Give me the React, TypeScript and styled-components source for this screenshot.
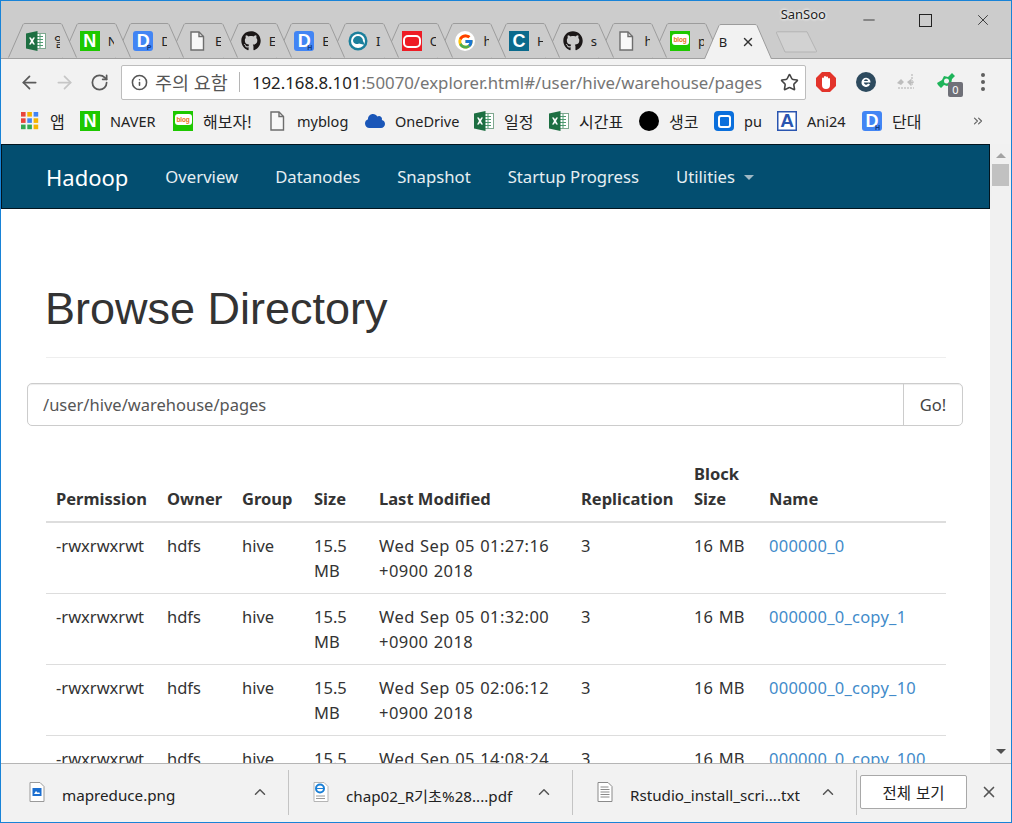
import React from "react";
import styled, { createGlobalStyle } from "styled-components";
import { ArrowLeft, ArrowRight, RotateCw, Info, Star, ChevronUp, X, Minus, ChevronsRight } from "lucide-react";
import { FaGithub, FaCloud } from "react-icons/fa";
import { FcGoogle } from "react-icons/fc";

const UI_FONT = `"Noto Sans", "Noto Sans CJK KR", sans-serif`;

const GlobalStyle = createGlobalStyle`
  html, body {
    margin: 0;
    height: 100%;
    overflow: hidden;
    background: #fff;
  }
  body {
    font-family: ${UI_FONT};
  }
`;

const Window = styled.div`
  box-sizing: border-box;
  width: 1012px;
  height: 823px;
  border: 1px solid #1883d7;
  display: flex;
  flex-direction: column;
  position: relative;
  overflow: hidden;
`;

/* ---- title bar + tabs ---- */

const TitleBar = styled.div`
  box-sizing: border-box;
  height: 58px;
  flex: none;
  background: #cccccc;
  border-bottom: 1px solid #a0a0a0;
  padding-left: 7px;
  display: flex;
  align-items: flex-end;
  position: relative;
`;

const Tab = styled.div<{ $z: number; $active?: boolean }>`
  position: relative;
  z-index: ${(p) => p.$z};
  width: ${(p) => (p.$active ? 68 : 69)}px;
  height: 35px;
  flex: none;
  margin-right: ${(p) => (p.$active ? 0 : -15.33)}px;
  margin-left: ${(p) => (p.$active ? -2 : 0)}px;
  margin-bottom: ${(p) => (p.$active ? -1 : 0)}px;
  display: flex;
  align-items: center;
  gap: ${(p) => (p.$active ? 0 : 8)}px;
  padding: 1px 0 0 ${(p) => (p.$active ? 15 : 18)}px;
  box-sizing: border-box;
`;

const TabShape = styled.svg`
  position: absolute;
  inset: 0;
  width: 100%;
  height: 100%;
`;

const TabIcon = styled.span`
  position: relative;
  display: flex;
  flex: none;
`;

const TabTitle = styled.span<{ $active?: boolean }>`
  position: relative;
  width: ${(p) => (p.$active ? 20 : 6)}px;
  overflow: hidden;
  font-size: 13px;
  line-height: 18px;
  color: #222;
  white-space: nowrap;
  flex: none;
`;

const TabClose = styled.span`
  position: relative;
  display: flex;
  color: #333;
  margin-left: 2px;
`;

const NewTab = styled.svg`
  width: 43px;
  height: 22px;
  flex: none;
  margin: 0 0 5px 3px;
`;

const WindowArea = styled.div`
  position: absolute;
  top: 0;
  right: 0;
  height: 38px;
  display: flex;
  align-items: center;
  z-index: 40;
`;

const UserName = styled.span`
  font-size: 13px;
  color: #222;
  text-shadow: 0 0 3px #fff, 0 0 3px #fff;
  margin-right: 14px;
  position: relative;
  top: -6px;
`;

const WinButton = styled.span`
  width: 57px;
  display: flex;
  justify-content: center;
  color: #222;
`;

const MaximizeBox = styled.span`
  box-sizing: border-box;
  width: 13px;
  height: 13px;
  border: 1px solid #222;
`;

/* ---- address toolbar ---- */

const Toolbar = styled.div`
  box-sizing: border-box;
  height: 47px;
  flex: none;
  background: #f2f2f2;
  display: flex;
  align-items: center;
  padding: 0 0 1px 11px;
`;

const NavButton = styled.span<{ $muted?: boolean }>`
  width: 35px;
  display: flex;
  justify-content: center;
  color: ${(p) => (p.$muted ? "#c6c6c6" : "#5a5a5a")};
`;

const Omnibox = styled.div`
  box-sizing: border-box;
  width: 685px;
  height: 35px;
  margin-left: 4px;
  background: #fff;
  border: 1px solid #bdbdbd;
  border-radius: 2px;
  display: flex;
  align-items: center;
  padding-left: 9px;
  color: #555;
`;

const SecurityLabel = styled.span`
  font-size: 18.5px;
  color: #555;
  margin-left: 7px;
  white-space: nowrap;
`;

const OmniDivider = styled.span`
  width: 1px;
  height: 20px;
  background: #b5b5b5;
  margin: 0 12px 0 11px;
`;

const Url = styled.span`
  flex: 1;
  font-size: 16.8px;
  color: #757575;
  white-space: nowrap;
  overflow: hidden;
`;

const UrlHost = styled.span`
  color: #222;
`;

const OmniStar = styled.span`
  display: flex;
  width: 32px;
  justify-content: center;
  color: #444;
`;

const ExtSlot = styled.span`
  width: 40px;
  display: flex;
  justify-content: center;
  position: relative;
`;

const ExtBadge = styled.span`
  position: absolute;
  left: 22px;
  top: 10px;
  width: 15px;
  height: 15px;
  border-radius: 2px;
  background: #6f7078;
  color: #fff;
  font-size: 11px;
  line-height: 15px;
  text-align: center;
`;

const Kebab = styled.span`
  display: flex;
  flex-direction: column;
  gap: 3px;
  margin-left: 15px;
  i {
    display: block;
    width: 4px;
    height: 4px;
    border-radius: 50%;
    background: #5f5f5f;
  }
`;

/* ---- bookmarks ---- */

const BookmarkBar = styled.div`
  box-sizing: border-box;
  height: 38px;
  flex: none;
  background: #f2f2f2;
  display: flex;
  align-items: center;
  padding: 0 26px 8px 19px;
`;

const Bookmark = styled.span<{ $w: number; $ko?: boolean }>`
  display: flex;
  align-items: center;
  gap: 10px;
  width: ${(p) => p.$w}px;
  flex: none;
  font-size: ${(p) => (p.$ko ? 16 : 14.5)}px;
  color: #222;
  white-space: nowrap;
`;

const MoreBookmarks = styled.span`
  margin-left: auto;
  display: flex;
  color: #666;
`;

/* ---- favicons ---- */

const Fav = styled.span<{ $bg: string; $round?: number }>`
  position: relative;
  width: 20px;
  height: 20px;
  flex: none;
  display: flex;
  align-items: center;
  justify-content: center;
  background: ${(p) => p.$bg};
  border-radius: ${(p) => p.$round ?? 0}px;
  color: #fff;
  font-family: "Liberation Sans", sans-serif;
  font-weight: 700;
  font-size: 18px;
  overflow: hidden;
`;

const FavSub = styled.span`
  position: absolute;
  right: 2px;
  bottom: -1px;
  font-size: 7px;
  line-height: 8px;
  color: #123a80;
`;

const BlogBubble = styled.span`
  width: 17px;
  height: 11px;
  margin-top: -3px;
  background: #fff;
  border-radius: 3px;
  color: #e8761a;
  font-size: 6.5px;
  line-height: 11px;
  text-align: center;
  letter-spacing: -0.2px;
`;

const OracleRing = styled.span`
  width: 14px;
  height: 9px;
  border: 2px solid #fff;
  border-radius: 5px;
`;

const QSquare = styled.span`
  width: 9px;
  height: 9px;
  border: 2.5px solid #fff;
  border-radius: 3px;
`;

const LetterA = styled.span`
  color: #2a55b0;
  font-size: 19px;
`;

const ABox = styled(Fav)`
  box-shadow: inset 0 0 0 1.5px #2a55b0;
`;

type FavKind = "excel" | "naver" | "dp" | "dh" | "doc" | "github" | "ring" | "oracle" | "google" | "c" | "blog" | "apps" | "cloud" | "dot" | "q" | "a";

const ExcelIcon = () => (
  <svg width="20" height="20" viewBox="0 0 20 20">
    <rect x="8" y="2.5" width="11.5" height="15" fill="#fff" stroke="#7fa88f" />
    <path d="M11 5.5h6M11 8.5h6M11 11.5h6M11 14.5h6M14 3v14" stroke="#4f9a70" strokeWidth="1" />
    <path d="M0 2.6 11.5 0v20L0 17.4z" fill="#1d6f42" />
    <path d="M3 6.5h1.9L6 8.6l1.2-2.1H9L7 10l2 3.5H7.1L6 11.4l-1.1 2.1H3L5 10z" fill="#fff" />
  </svg>
);

const DocIcon = () => (
  <svg width="20" height="20" viewBox="0 0 20 20" fill="none" stroke="#6e6e6e" strokeWidth="1.4">
    <path d="M4 1h8l4.5 4.5V19H4z" fill="#f8f8f8" />
    <path d="M12 1v4.5h4.5" />
  </svg>
);

const RingIcon = () => (
  <svg width="20" height="20" viewBox="0 0 20 20">
    <circle cx="10" cy="10" r="9.5" fill="#1b7f9c" />
    <circle cx="10" cy="10" r="7" fill="#fff" />
    <path d="M5 10a5 5 0 0 1 10 0l2 4-6-1.5A4 4 0 0 1 5 10z" fill="#1b7f9c" />
  </svg>
);

const AppsIcon = () => {
  const colors = ["#e8453c", "#f4b400", "#4285f4", "#e8453c", "#4285f4", "#f4b400", "#34a853", "#34a853", "#f4b400"];
  return (
    <svg width="20" height="20" viewBox="0 0 20 20">
      {colors.map((c, i) => (
        <rect key={i} x={1 + (i % 3) * 6.3} y={1 + Math.floor(i / 3) * 6.3} width="4.6" height="4.6" fill={c} />
      ))}
    </svg>
  );
};

const Favicon: React.FC<{ kind: FavKind }> = ({ kind }) => {
  switch (kind) {
    case "excel":
      return <ExcelIcon />;
    case "naver":
      return <Fav $bg="#1ec800">N</Fav>;
    case "dp":
      return (
        <Fav $bg="#4285f4" $round={3}>
          D<FavSub>P</FavSub>
        </Fav>
      );
    case "dh":
      return (
        <Fav $bg="#4285f4" $round={3}>
          D<FavSub>H</FavSub>
        </Fav>
      );
    case "doc":
      return <DocIcon />;
    case "github":
      return <FaGithub size={20} color="#1b1717" />;
    case "ring":
      return <RingIcon />;
    case "oracle":
      return (
        <Fav $bg="#ee1c25">
          <OracleRing />
        </Fav>
      );
    case "google":
      return (
        <Fav $bg="#fff" $round={10}>
          <FcGoogle size={17} />
        </Fav>
      );
    case "c":
      return <Fav $bg="#0b6a8c">C</Fav>;
    case "blog":
      return (
        <Fav $bg="#1ec800">
          <BlogBubble>blog</BlogBubble>
        </Fav>
      );
    case "apps":
      return <AppsIcon />;
    case "cloud":
      return <FaCloud size={20} color="#1a56b8" />;
    case "dot":
      return <Fav $bg="#000" $round={10} />;
    case "q":
      return (
        <Fav $bg="#0a6fdc" $round={4}>
          <QSquare />
        </Fav>
      );
    case "a":
      return (
        <ABox $bg="#fff">
          <LetterA>A</LetterA>
        </ABox>
      );
  }
};

/* ---- page ---- */

const Viewport = styled.div`
  flex: 1;
  min-height: 0;
  display: flex;
  background: #fff;
`;

const Page = styled.div`
  flex: 1;
  min-width: 0;
  overflow: hidden;
`;

const Navbar = styled.nav`
  box-sizing: border-box;
  height: 65px;
  background: #034e70;
  border: 1px solid #02151f;
  display: flex;
  align-items: center;
  padding-left: 44px;
`;

const Brand = styled.span`
  font-size: 22px;
  color: #fff;
  margin-right: 37px;
`;

const NavLink = styled.span`
  font-size: 16.7px;
  color: #e6eef2;
  margin-right: 37px;
  display: flex;
  align-items: center;
  white-space: nowrap;
`;

const Caret = styled.span`
  width: 0;
  height: 0;
  margin-left: 9px;
  margin-top: 2px;
  border-top: 5px solid #9fb8c4;
  border-left: 5px solid transparent;
  border-right: 5px solid transparent;
`;

const Content = styled.div`
  padding: 0 44px 0 45px;
`;

const PageHeader = styled.div`
  margin-top: 75px;
  padding-bottom: 23px;
  border-bottom: 1px solid #eeeeee;
`;

const Title = styled.h1`
  margin: 0 0 0 -1px;
  font-family: "Liberation Sans", Arial, sans-serif;
  font-weight: 400;
  font-size: 45px;
  line-height: 49.5px;
  color: #333;
`;

const InputGroup = styled.div`
  box-sizing: border-box;
  height: 43px;
  margin: 25px -17px 0 -19px;
  border: 1px solid #cccccc;
  border-radius: 5px;
  box-shadow: inset 0 1px 1px rgba(0, 0, 0, 0.075);
  display: flex;
  align-items: center;
  font-size: 16.5px;
  color: #555;
`;

const PathText = styled.span`
  flex: 1;
  padding-left: 15px;
`;

const GoButton = styled.span`
  width: 59px;
  height: 100%;
  box-sizing: border-box;
  border-left: 1px solid #cccccc;
  display: flex;
  align-items: center;
  justify-content: center;
  color: #444;
`;

const Table = styled.table`
  width: 900px;
  margin-top: 25px;
  table-layout: fixed;
  border-collapse: collapse;
  font-size: 16.5px;
  line-height: 25px;
  color: #333;
`;

const HeadCell = styled.th`
  padding: 10px;
  text-align: left;
  vertical-align: bottom;
  font-weight: 700;
  border-bottom: 2px solid #dddddd;
`;

const Cell = styled.td`
  padding: 10px;
  vertical-align: top;
  border-top: 1px solid #dddddd;
  word-spacing: 1.5px;
`;

const DateText = styled.span`
  letter-spacing: 0.45px;
  word-spacing: 0.5px;
`;

const FileLink = styled.span`
  color: #428bca;
  white-space: nowrap;
  letter-spacing: 0.25px;
`;

const Scrollbar = styled.div`
  width: 21px;
  flex: none;
  background: #f1f1f1;
  display: flex;
  flex-direction: column;
  align-items: center;
`;

const ScrollArrow = styled.span<{ $down?: boolean }>`
  width: 0;
  height: 0;
  border-left: 5px solid transparent;
  border-right: 5px solid transparent;
  ${(p) => (p.$down ? "border-top: 5px solid #505050;" : "border-bottom: 5px solid #a3a3a3;")}
  margin-top: ${(p) => (p.$down ? "auto" : "9px")};
  margin-bottom: ${(p) => (p.$down ? "9px" : "0")};
`;

const ScrollThumb = styled.span`
  width: 17px;
  height: 22px;
  margin-top: 6px;
  background: #c1c1c1;
`;

/* ---- download shelf ---- */

const Shelf = styled.div`
  box-sizing: border-box;
  height: 59px;
  flex: none;
  background: #f2f2f2;
  border-top: 1px solid #b5b5b5;
  display: flex;
  align-items: center;
  padding-bottom: 2px;
`;

const DownloadItem = styled.div`
  box-sizing: border-box;
  width: 284px;
  flex: none;
  height: 45px;
  display: flex;
  align-items: center;
  padding-left: 24px;
  border-right: 1px solid #c4c4c4;
  font-size: 15.2px;
  color: #222;
`;

const FirstItem = styled(DownloadItem)`
  width: 288px;
  padding-left: 28px;
`;

const FileIconSlot = styled.span`
  display: flex;
  width: 33px;
  flex: none;
`;

const FileName = styled.span`
  flex: 1;
  white-space: nowrap;
  overflow: hidden;
  padding-top: 6px;
`;

const ItemChevron = styled.span`
  display: flex;
  width: 56px;
  flex: none;
  justify-content: center;
  color: #555;
`;

const ShowAll = styled.span`
  box-sizing: border-box;
  width: 107px;
  height: 34px;
  margin-left: 3px;
  background: #fff;
  border: 1px solid #a8a8a8;
  border-radius: 2px;
  font-size: 15.5px;
  word-spacing: 1px;
  color: #222;
  display: flex;
  align-items: center;
  justify-content: center;
`;

const ShelfClose = styled.span`
  margin-left: 13px;
  display: flex;
  color: #555;
`;

const ImageFile = () => (
  <svg width="16" height="20" viewBox="0 0 16 20">
    <path d="M1 .5h10l4 4v15H1z" fill="#fff" stroke="#9a9a9a" />
    <rect x="3.5" y="6" width="9" height="8" fill="#1c6fd0" />
    <path d="M5 12l2-3 2 2 1-1 1 2z" fill="#fff" />
  </svg>
);

const PdfFile = () => (
  <svg width="16" height="20" viewBox="0 0 16 20">
    <path d="M1 .5h10l4 4v15H1z" fill="#fff" stroke="#b5b5b5" />
    <circle cx="7" cy="6.5" r="4" fill="none" stroke="#1a7fd6" strokeWidth="2" />
    <path d="M4 6.5h6" stroke="#1a7fd6" />
    <path d="M3 14h9M3 16.5h9" stroke="#999" />
  </svg>
);

const TextFile = () => (
  <svg width="16" height="20" viewBox="0 0 16 20">
    <path d="M1 .5h10l4 4v15H1z" fill="#fff" stroke="#8a8a8a" />
    <path d="M3.5 5h8M3.5 7.5h9M3.5 10h9M3.5 12.5h9M3.5 15h9" stroke="#8a8a8a" />
  </svg>
);

/* ---- data ---- */

const TAB_ICONS: { kind: FavKind; letter: string }[] = [
  { kind: "excel", letter: "일" },
  { kind: "naver", letter: "N" },
  { kind: "dp", letter: "D" },
  { kind: "doc", letter: "E" },
  { kind: "github", letter: "E" },
  { kind: "dh", letter: "E" },
  { kind: "ring", letter: "I" },
  { kind: "oracle", letter: "O" },
  { kind: "google", letter: "h" },
  { kind: "c", letter: "H" },
  { kind: "github", letter: "s" },
  { kind: "doc", letter: "h" },
  { kind: "blog", letter: "p" },
];

const BOOKMARKS: { kind: FavKind; label: string; w: number; ko?: boolean }[] = [
  { kind: "apps", label: "앱", w: 60, ko: true },
  { kind: "naver", label: "NAVER", w: 93 },
  { kind: "blog", label: "해보자!", w: 94, ko: true },
  { kind: "doc", label: "myblog", w: 98 },
  { kind: "cloud", label: "OneDrive", w: 109 },
  { kind: "excel", label: "일정", w: 75, ko: true },
  { kind: "excel", label: "시간표", w: 90, ko: true },
  { kind: "dot", label: "생코", w: 75, ko: true },
  { kind: "q", label: "pu", w: 63 },
  { kind: "a", label: "Ani24", w: 85 },
  { kind: "dh", label: "단대", w: 60, ko: true },
];

const ROWS = [
  { date: "Wed Sep 05 01:27:16 +0900 2018", name: "000000_0" },
  { date: "Wed Sep 05 01:32:00 +0900 2018", name: "000000_0_copy_1" },
  { date: "Wed Sep 05 02:06:12 +0900 2018", name: "000000_0_copy_10" },
  { date: "Wed Sep 05 14:08:24 +0900 2018", name: "000000_0_copy_100" },
];

const COLUMNS = [111, 75, 72, 65, 202, 113, 75, 187];

const App: React.FC = () => {
  return (
    <Window>
      <GlobalStyle />
      <TitleBar>
        {TAB_ICONS.map((t, i) => (
          <Tab key={i} $z={20 - i}>
            <TabShape viewBox="0 0 69 35" preserveAspectRatio="none">
              <path d="M0.5 34.5 L15 1.5 Q15.5 0.5 17 0.5 H52 Q53.5 0.5 54 1.5 L68.5 34.5" fill="#cccccc" stroke="#9c9c9c" />
            </TabShape>
            <TabIcon>
              <Favicon kind={t.kind} />
            </TabIcon>
            <TabTitle>{t.letter}</TabTitle>
          </Tab>
        ))}
        <Tab $z={30} $active>
          <TabShape viewBox="0 0 68 35" preserveAspectRatio="none">
            <path d="M0.5 35 L15 1.5 Q15.5 0.5 17 0.5 H51 Q52.5 0.5 53 1.5 L67.5 35" fill="#f2f2f2" stroke="#9c9c9c" />
          </TabShape>
          <TabTitle $active>B</TabTitle>
          <TabClose>
            <X size={14} strokeWidth={2.4} />
          </TabClose>
        </Tab>
        <NewTab viewBox="0 0 43 22">
          <path d="M1.5 2 Q1 .8 2.5 .8 H32 L41.5 20 Q42 21 40.5 21 H10z" fill="#d2d2d2" stroke="#b4b4b4" />
        </NewTab>
        <WindowArea>
          <UserName>SanSoo</UserName>
          <WinButton>
            <Minus size={18} strokeWidth={1.1} />
          </WinButton>
          <WinButton>
            <MaximizeBox />
          </WinButton>
          <WinButton>
            <X size={18} strokeWidth={1.1} />
          </WinButton>
        </WindowArea>
      </TitleBar>

      <Toolbar>
        <NavButton>
          <ArrowLeft size={21} strokeWidth={2} />
        </NavButton>
        <NavButton $muted>
          <ArrowRight size={21} strokeWidth={2} />
        </NavButton>
        <NavButton>
          <RotateCw size={19} strokeWidth={2.2} />
        </NavButton>
        <Omnibox>
          <Info size={17} strokeWidth={2.2} />
          <SecurityLabel>주의 요함</SecurityLabel>
          <OmniDivider />
          <Url>
            <UrlHost>192.168.8.101</UrlHost>:50070/explorer.html#/user/hive/warehouse/pages
          </Url>
          <OmniStar>
            <Star size={19} strokeWidth={2} />
          </OmniStar>
        </Omnibox>
        <ExtSlot>
          <svg width="20" height="20" viewBox="0 0 20 20">
            <path d="M6 0h8l6 6v8l-6 6H6l-6-6V6z" fill="#e3342b" />
            <path d="M6 12V6.5a1 1 0 0 1 2 0V5a1 1 0 0 1 2 0v.5a1 1 0 0 1 2 0V7a1 1 0 0 1 2 0v6a4 4 0 0 1-8 0z" fill="#fff" />
          </svg>
        </ExtSlot>
        <ExtSlot>
          <svg width="20" height="20" viewBox="0 0 20 20">
            <circle cx="10" cy="10" r="10" fill="#2d4a5e" />
            <path d="M5.5 10a4.5 4.5 0 0 1 9 0.6H7.8a2.4 2.4 0 0 0 4.4 1l1.9 1A4.6 4.6 0 0 1 5.5 10zM7.9 8.9h4.2a2.2 2.2 0 0 0-4.2 0z" fill="#fff" />
          </svg>
        </ExtSlot>
        <ExtSlot>
          <svg width="20" height="20" viewBox="0 0 20 20">
            <path d="M1 11l4-4 3 3-3 3zM11 10l4-3 3 3-3 4z" fill="#bdbdbd" />
            <path d="M16 2v11M2 16h16" stroke="#d0d0d0" strokeWidth="2" strokeDasharray="2 1" />
          </svg>
        </ExtSlot>
        <ExtSlot>
          <svg width="20" height="20" viewBox="0 0 20 20">
            <path d="M1 11l5-3 2-4 4 1 4-4 3 3-3 3-1 5-4 2-3-1-3 3-3-3z" fill="#1eb45a" />
            <circle cx="10.5" cy="9" r="2.5" fill="#f2f2f2" />
          </svg>
          <ExtBadge>0</ExtBadge>
        </ExtSlot>
        <Kebab>
          <i />
          <i />
          <i />
        </Kebab>
      </Toolbar>

      <BookmarkBar>
        {BOOKMARKS.map((b) => (
          <Bookmark key={b.label} $w={b.w} $ko={b.ko}>
            <Favicon kind={b.kind} />
            {b.label}
          </Bookmark>
        ))}
        <MoreBookmarks>
          <ChevronsRight size={14} strokeWidth={2} />
        </MoreBookmarks>
      </BookmarkBar>

      <Viewport>
        <Page>
          <Navbar>
            <Brand>Hadoop</Brand>
            <NavLink>Overview</NavLink>
            <NavLink>Datanodes</NavLink>
            <NavLink>Snapshot</NavLink>
            <NavLink>Startup Progress</NavLink>
            <NavLink>
              Utilities
              <Caret />
            </NavLink>
          </Navbar>
          <Content>
            <PageHeader>
              <Title>Browse Directory</Title>
            </PageHeader>
            <InputGroup>
              <PathText>/user/hive/warehouse/pages</PathText>
              <GoButton>Go!</GoButton>
            </InputGroup>
            <Table>
              <colgroup>
                {COLUMNS.map((w, i) => (
                  <col key={i} width={w} />
                ))}
              </colgroup>
              <thead>
                <tr>
                  <HeadCell>Permission</HeadCell>
                  <HeadCell>Owner</HeadCell>
                  <HeadCell>Group</HeadCell>
                  <HeadCell>Size</HeadCell>
                  <HeadCell>Last Modified</HeadCell>
                  <HeadCell>Replication</HeadCell>
                  <HeadCell>Block Size</HeadCell>
                  <HeadCell>Name</HeadCell>
                </tr>
              </thead>
              <tbody>
                {ROWS.map((r) => (
                  <tr key={r.name}>
                    <Cell>-rwxrwxrwt</Cell>
                    <Cell>hdfs</Cell>
                    <Cell>hive</Cell>
                    <Cell>15.5 MB</Cell>
                    <Cell>
                      <DateText>{r.date}</DateText>
                    </Cell>
                    <Cell>3</Cell>
                    <Cell>16 MB</Cell>
                    <Cell>
                      <FileLink>{r.name}</FileLink>
                    </Cell>
                  </tr>
                ))}
              </tbody>
            </Table>
          </Content>
        </Page>
        <Scrollbar>
          <ScrollArrow />
          <ScrollThumb />
          <ScrollArrow $down />
        </Scrollbar>
      </Viewport>

      <Shelf>
        <FirstItem>
          <FileIconSlot>
            <ImageFile />
          </FileIconSlot>
          <FileName>mapreduce.png</FileName>
          <ItemChevron>
            <ChevronUp size={18} strokeWidth={2} />
          </ItemChevron>
        </FirstItem>
        <DownloadItem>
          <FileIconSlot>
            <PdfFile />
          </FileIconSlot>
          <FileName>chap02_R기초%28....pdf</FileName>
          <ItemChevron>
            <ChevronUp size={18} strokeWidth={2} />
          </ItemChevron>
        </DownloadItem>
        <DownloadItem>
          <FileIconSlot>
            <TextFile />
          </FileIconSlot>
          <FileName>Rstudio_install_scri....txt</FileName>
          <ItemChevron>
            <ChevronUp size={18} strokeWidth={2} />
          </ItemChevron>
        </DownloadItem>
        <ShowAll>전체 보기</ShowAll>
        <ShelfClose>
          <X size={18} strokeWidth={2.2} />
        </ShelfClose>
      </Shelf>
    </Window>
  );
};

export default App;
